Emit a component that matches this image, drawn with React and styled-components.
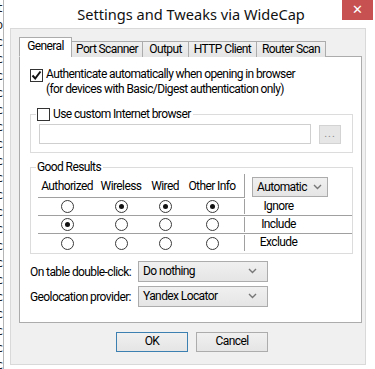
import React from 'react';
import styled, { createGlobalStyle } from 'styled-components';

const GlobalStyle = createGlobalStyle`
  html, body {
    margin: 0;
    padding: 0;
    background: #fff;
  }
  body {
    font-family: Roboto, "Liberation Sans", sans-serif;
    font-size: 12px;
    letter-spacing: -0.6px;
    color: #000;
  }
  * { box-sizing: border-box; }
`;

const Screen = styled.div`
  width: 375px;
  height: 369px;
  display: flex;
  overflow: hidden;
  background: #fff;
`;

const BehindStrip = styled.div`
  width: 4px;
  flex: none;
  overflow: hidden;
  border-right: 1px solid #b5b5b5;
  font-family: "DejaVu Sans Mono", monospace;
  font-size: 12px;
  letter-spacing: 0;
  line-height: 17px;
  color: #222;
  span {
    display: block;
    margin-left: -4px;
  }
`;

const Frame = styled.div`
  flex: 1;
  display: flex;
  flex-direction: column;
`;

const TitleBar = styled.div`
  height: 28px;
  display: grid;
  grid-template-columns: 1fr auto 1fr;
  align-items: start;
`;

const Title = styled.div`
  grid-column: 2;
  font-family: "Noto Sans", sans-serif;
  font-size: 14.6px;
  letter-spacing: 0;
  line-height: 28px;
  color: #111;
  padding-left: 3px;
`;

const CloseButton = styled.div`
  grid-column: 3;
  justify-self: end;
  margin-right: 2px;
  width: 31px;
  height: 20px;
  background: #c75050;
  color: #fff;
  font-size: 13px;
  letter-spacing: 0;
  line-height: 19px;
  text-align: center;
`;

const Client = styled.div`
  margin-left: 6px;
  width: 356px;
  height: 337px;
  background: #f0f0f0;
  border: 1px solid #d9d9d9;
  display: flex;
  flex-direction: column;
`;

const TabStrip = styled.div`
  display: flex;
  align-items: flex-end;
  margin: 8px 0 0 8px;
  height: 20px;
  position: relative;
  z-index: 1;
`;

const Tab = styled.div`
  width: ${p => p.$w}px;
  height: ${p => (p.$active ? 20 : 16)}px;
  margin-left: -1px;
  border: 1px solid #acacac;
  border-bottom: ${p => (p.$active ? '1px solid #fff' : 'none')};
  background: ${p => (p.$active ? '#fff' : 'linear-gradient(#f0f0f0, #e5e5e5)')};
  text-align: center;
  line-height: ${p => (p.$active ? 17 : 15)}px;
  white-space: nowrap;
  &:first-child { margin-left: 0; }
`;

const Panel = styled.div`
  margin: -1px 3px 0 8px;
  height: 267px;
  background: #fff;
  border: 1px solid #acacac;
  display: flex;
  flex-direction: column;
`;

const CheckRow = styled.label`
  display: flex;
  gap: 3px;
  margin: 10px 0 0 10px;
  line-height: 15px;
`;

const Box = styled.span`
  flex: none;
  width: 13px;
  height: 13px;
  margin-top: ${p => p.$top || 0}px;
  border: 1px solid #333;
  background: #fff;
  display: flex;
  align-items: center;
  justify-content: center;
`;

const Group = styled.fieldset`
  margin: ${p => p.$top}px 8px 0 10px;
  padding: 0;
  border: 1px solid #dcdcdc;
  min-width: 0;
`;

const Legend = styled.legend`
  margin-left: 5px;
  padding: 0 2px 0 1px;
  display: flex;
  align-items: center;
  gap: 3px;
  line-height: 14px;
`;

const BrowserRow = styled.div`
  display: flex;
  gap: 8px;
  padding: 3px 9px 8px 8px;
`;

const PathInput = styled.div`
  width: 272px;
  height: 20px;
  border: 1px solid #cfcfcf;
  background: #fff;
`;

const BrowseButton = styled.div`
  width: 22px;
  height: 19px;
  margin-top: 1px;
  border: 1px solid #d3d3d3;
  background: #e6e6e6;
  color: #8a8a8a;
  text-align: center;
  line-height: 15px;
  font-size: 11px;
  letter-spacing: 1px;
`;

const ResultsBody = styled.div`
  padding: 0 0 1px 7px;
`;

const HeaderRow = styled.div`
  display: flex;
  align-items: flex-start;
`;

const HeaderCols = styled.div`
  display: grid;
  grid-template-columns: 58px 50px 38px 56px;
  width: 207px;
  height: 24px;
  border-bottom: 1px solid #a0a0a0;
  border-right: 1px solid #a0a0a0;
  align-items: center;
  padding-top: 1px;
  span {
    text-align: center;
    white-space: nowrap;
  }
`;

const Combo = styled.div`
  width: ${p => p.$w}px;
  height: ${p => p.$h || 21}px;
  margin: ${p => p.$m || 0};
  border: 1px solid #acacac;
  background: linear-gradient(#f0f0f0, #e5e5e5);
  display: flex;
  align-items: center;
  justify-content: space-between;
  padding: 0 ${p => p.$pr || 9}px 1px 4px;
  white-space: nowrap;
`;

const Row = styled.div`
  display: grid;
  grid-template-columns: 58px 50px 38px 56px 4px 67px;
  height: 18px;
  align-items: center;
  border-bottom: ${p => (p.$last ? 'none' : '1px solid #a0a0a0')};
`;

const RadioCell = styled.div`
  display: flex;
  justify-content: center;
`;

const Radio = styled.span`
  width: 13px;
  height: 13px;
  border: 1px solid #3a3a3a;
  border-radius: 50%;
  background: #fff;
  display: flex;
  align-items: center;
  justify-content: center;
  &::after {
    content: '';
    width: 5px;
    height: 5px;
    border-radius: 50%;
    background: ${p => (p.$on ? '#111' : 'transparent')};
  }
`;

const RowLabel = styled.div`
  grid-column: 6;
  align-self: stretch;
  margin: 1px 0;
  border-left: 1px solid #a0a0a0;
  text-align: center;
  line-height: 15px;
  padding-left: 1px;
`;

const OptionGrid = styled.div`
  display: grid;
  grid-template-columns: 108px 130px;
  row-gap: 4px;
  align-items: center;
  margin: 7px 0 0 10px;
  white-space: nowrap;
`;

const ButtonRow = styled.div`
  display: flex;
  justify-content: center;
  gap: 8px;
  padding-left: 8px;
  margin-top: 9px;
`;

const Button = styled.div`
  width: 72px;
  height: 20px;
  border: 1px solid ${p => (p.$default ? '#3c7fb1' : '#acacac')};
  background: linear-gradient(#f0f0f0, #e5e5e5);
  text-align: center;
  line-height: 17px;
`;

const Check = () => (
  <svg width="11" height="11" viewBox="0 0 11 11">
    <path d="M1.5 5.5 L4.2 8.5 L9.5 1.5" fill="none" stroke="#111" strokeWidth="2" />
  </svg>
);

const Chevron = () => (
  <svg width="9" height="6" viewBox="0 0 9 6">
    <path d="M1 1 L4.5 4.5 L8 1" fill="none" stroke="#777" strokeWidth="1.4" />
  </svg>
);

const tabs = [
  { label: 'General', w: 53, active: true },
  { label: 'Port Scanner', w: 72 },
  { label: 'Output', w: 47 },
  { label: 'HTTP Client', w: 69 },
  { label: 'Router Scan', w: 70 },
];

const results = [
  { label: 'Ignore', on: [false, true, true, true] },
  { label: 'Include', on: [true, false, false, false] },
  { label: 'Exclude', on: [false, false, false, false] },
];

const behind = ['t', 'o', 'c', 'c', 'c', 'c', 'c', 'c', 'c', 'c', 'c', 'c', 'c', 'c', 'c', 'c', 'c', 'c', 'c', 'c', 'c', 'c'];

export default function App() {
  return (
    <>
      <GlobalStyle />
      <Screen>
        <BehindStrip>
          {behind.map((c, i) => <span key={i}>{c}</span>)}
        </BehindStrip>
        <Frame>
          <TitleBar>
            <Title>Settings and Tweaks via WideCap</Title>
            <CloseButton>✕</CloseButton>
          </TitleBar>
          <Client>
            <TabStrip>
              {tabs.map(t => (
                <Tab key={t.label} $w={t.w} $active={t.active}>{t.label}</Tab>
              ))}
            </TabStrip>
            <Panel>
              <CheckRow>
                <Box $top={2}><Check /></Box>
                <span>
                  Authenticate automatically when opening in browser<br />
                  (for devices with Basic/Digest authentication only)
                </span>
              </CheckRow>

              <Group $top={10}>
                <Legend>
                  <Box />
                  Use custom Internet browser
                </Legend>
                <BrowserRow>
                  <PathInput />
                  <BrowseButton>...</BrowseButton>
                </BrowserRow>
              </Group>

              <Group $top={7}>
                <Legend>Good Results</Legend>
                <ResultsBody>
                  <HeaderRow>
                    <HeaderCols>
                      <span>Authorized</span>
                      <span>Wireless</span>
                      <span>Wired</span>
                      <span>Other Info</span>
                    </HeaderCols>
                    <Combo $w={76} $h={20} $pr={5} $m="3px 0 0 7px">
                      Automatic <Chevron />
                    </Combo>
                  </HeaderRow>
                  {results.map((r, i) => (
                    <Row key={r.label} $last={i === results.length - 1}>
                      {r.on.map((on, j) => (
                        <RadioCell key={j}><Radio $on={on} /></RadioCell>
                      ))}
                      <RowLabel>{r.label}</RowLabel>
                    </Row>
                  ))}
                </ResultsBody>
              </Group>

              <OptionGrid>
                <span>On table double-click:</span>
                <Combo $w={130} $pr={10}>Do nothing <Chevron /></Combo>
                <span>Geolocation provider:</span>
                <Combo $w={130} $pr={10}>Yandex Locator <Chevron /></Combo>
              </OptionGrid>
            </Panel>
            <ButtonRow>
              <Button $default>OK</Button>
              <Button>Cancel</Button>
            </ButtonRow>
          </Client>
        </Frame>
      </Screen>
    </>
  );
}
